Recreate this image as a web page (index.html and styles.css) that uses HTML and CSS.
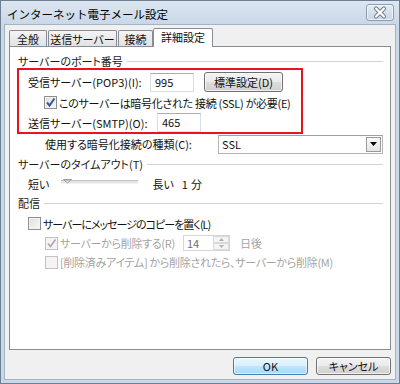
FILE: index.html
```html
<!DOCTYPE html>
<html lang="ja">
<head>
<meta charset="utf-8">
<title>インターネット電子メール設定</title>
<link rel="stylesheet" href="styles.css">
</head>
<body>
<div class="window">
  <div class="titlebar">
    <span class="title">インターネット電子メール設定</span>
    <span class="close">
      <svg width="26" height="15" viewBox="0 0 26 15"><path d="M9 3.5 L17 11.5 M17 3.5 L9 11.5" stroke="#6f7d8f" stroke-width="4.2" stroke-linecap="round"/><path d="M9 3.5 L17 11.5 M17 3.5 L9 11.5" stroke="#ffffff" stroke-width="2.2" stroke-linecap="round"/></svg>
    </span>
  </div>
  <div class="client">
    <div class="tabs">
      <span class="tab t1">全般</span>
      <span class="tab t2">送信サーバー</span>
      <span class="tab t3">接続</span>
      <span class="tab active">詳細設定</span>
    </div>
    <div class="panel">
      <div class="group first">サーバーのポート番号</div>
      <div class="highlight">
        <div class="row r1"><span class="lbl w-pop">受信サーバー(POP3)(I):</span><span class="input">995</span><span class="btn std">標準設定(D)</span></div>
        <div class="row r2"><span class="cb"><svg width="11" height="11" viewBox="0 0 11 11"><path d="M2 5.5 L4.5 8.5 L9.5 1.5" fill="none" stroke="#3b5597" stroke-width="2"/></svg></span><span class="tight">このサーバーは暗号化された 接続 (SSL) が必要(E)</span></div>
        <div class="row r3"><span class="lbl w-smtp">送信サーバー(SMTP)(O):</span><span class="input">465</span></div>
      </div>
      <div class="row r4"><span class="lbl w-enc">使用する暗号化接続の種類(C):</span><span class="select"><span class="sel-text">SSL</span><span class="sel-arrow"><svg width="7" height="4" viewBox="0 0 7 4"><path d="M0 0 H7 L3.5 4 Z" fill="#000"/></svg></span></span></div>
      <div class="group">サーバーのタイムアウト(T)</div>
      <div class="row timeout">
        <span>短い</span>
        <span class="slider"><span class="thumb"><svg width="9" height="6" viewBox="0 0 9 6"><path d="M0.5 1.5 H8.5 M0.5 1.5 L4.5 5 L8.5 1.5" fill="none" stroke="#9a9a9a" stroke-width="1"/></svg></span></span>
        <span class="long">長い</span>
        <span class="num">1</span>
        <span class="unit">分</span>
      </div>
      <div class="group">配信</div>
      <div class="row rl"><span class="cb"></span><span class="tighter">サーバーにメッセージのコピーを置く(L)</span></div>
      <div class="row rr disabled"><span class="cb dis"><svg width="11" height="11" viewBox="0 0 11 11"><path d="M2 5.5 L4.5 8.5 L9.5 1.5" fill="none" stroke="#a8a8a8" stroke-width="1.6"/></svg></span><span class="lbl w-del tight">サーバーから削除する(R)</span><span class="spin"><span class="spin-text">14</span><span class="spin-btns"><span class="sb"><svg width="5" height="3" viewBox="0 0 5 3"><path d="M0 3 L2.5 0 L5 3 Z" fill="#b0b0b0"/></svg></span><span class="sb"><svg width="5" height="3" viewBox="0 0 5 3"><path d="M0 0 L2.5 3 L5 0 Z" fill="#b0b0b0"/></svg></span></span></span><span class="days">日後</span></div>
      <div class="row rm disabled"><span class="cb dis"></span><span class="tight">[削除済みアイテム] から削除されたら、サーバーから削除(M)</span></div>
    </div>
    <div class="buttons">
      <span class="btn dlg default">OK</span>
      <span class="btn dlg">キャンセル</span>
    </div>
  </div>
</div>
</body>
</html>
```
FILE: styles.css
```css
* { box-sizing: border-box; margin: 0; padding: 0; }
html, body { width: 400px; height: 384px; overflow: hidden; }
body {
  font-family: "Noto Sans CJK JP", "Noto Sans", sans-serif;
  font-size: 11px;
  color: #111;
  font-feature-settings: "palt";
  background: #fff;
}
.window {
  width: 400px;
  height: 384px;
  border: 1px solid #6e7f92;
  background: #c9d7e7;
  padding: 0 3px 3px;
  display: flex;
  flex-direction: column;
}
.titlebar {
  height: 23px;
  flex: none;
  margin: 0 -3px;
  padding: 0 5px 0 6px;
  display: flex;
  align-items: flex-start;
  justify-content: space-between;
  background: linear-gradient(#dde7f2, #c9d7e7);
}
.title {
  font-size: 11.5px;
  line-height: 20px;
  margin-top: 3px;
  color: #000;
  font-feature-settings: normal;
}
.close {
  margin-top: 3px;
  width: 28px;
  height: 17px;
  border: 1px solid #8d9db1;
  border-radius: 3px;
  background: linear-gradient(#e4ecf5, #c8d6e6);
  display: flex;
  align-items: center;
  justify-content: center;
  box-shadow: inset 0 0 0 1px rgba(255,255,255,0.6);
}
.client {
  flex: 1;
  background: #f0f0f0;
  border: 1px solid #a3b2c4;
  padding: 3px 4px 4px 4px;
  display: flex;
  flex-direction: column;
}
.tabs {
  display: flex;
  align-items: flex-end;
  height: 18px;
  position: relative;
  z-index: 1;
}
.tab {
  height: 16px;
  border: 1px solid #898c95;
  border-bottom: none;
  background: linear-gradient(#f4f4f4, #e2e2e2);
  display: flex;
  align-items: center;
  justify-content: center;
  margin-right: 1px;
  line-height: 14px;
  border-radius: 2px 2px 0 0;
  white-space: nowrap;
}
.t1 { width: 38px; }
.t2 { width: 69px; }
.t3 { width: 35px; }
.tab.active {
  width: 60px;
  height: 19px;
  margin-left: -1px;
  margin-bottom: -1px;
  background: #fff;
  padding-bottom: 2px;
}
.panel {
  height: 304px;
  flex: none;
  background: #fff;
  border: 1px solid #898c95;
  padding: 0 7px 0 8px;
}
.group {
  height: 20px;
  display: flex;
  align-items: center;
  color: #1a1a1a;
}
.group::after {
  content: "";
  flex: 1;
  height: 1px;
  background: #d3d3d3;
  margin-left: 4px;
  margin-top: 1px;
}
.group.first { height: 15px; margin-top: 6px; }
.highlight {
  width: 286px;
  height: 66px;
  margin-left: -1px;
  border: 2px solid #e8141e;
  padding: 2px 0 0 9px;
}
.row {
  display: flex;
  align-items: center;
  white-space: nowrap;
}
.tight { letter-spacing: -0.3px; }
.tighter { letter-spacing: -1px; }
.lbl { flex: none; }
.r1 { height: 20px; }
.r2 { height: 21px; padding-left: 16px; }
.r3 { height: 19px; }
.w-pop { width: 122px; }
.w-smtp { width: 129px; }
.input {
  width: 44px;
  height: 19px;
  border: 1px solid #d9dfe6;
  border-top-color: #abadb3;
  padding-left: 4px;
  line-height: 17px;
  background: #fff;
}
.btn {
  display: flex;
  align-items: center;
  justify-content: center;
  border: 1px solid #707070;
  border-radius: 3px;
  background: linear-gradient(#f3f3f3 0%, #ebebeb 48%, #dddddd 52%, #cfcfcf 100%);
  box-shadow: inset 0 0 0 1px rgba(255,255,255,0.7);
}
.std { width: 79px; height: 20px; margin-left: 10px; }
.cb {
  flex: none;
  width: 13px;
  height: 13px;
  border: 1px solid #8e8f8f;
  background: linear-gradient(135deg, #dcdcdc, #fbfbfb);
  box-shadow: inset 0 0 0 1px #f4f4f4;
  margin-right: 2px;
  display: flex;
  align-items: center;
  justify-content: center;
}
.cb.dis {
  border-color: #c2c2c2;
  background: #f4f4f4;
  box-shadow: none;
}
.r4 { height: 20px; padding-left: 27px; }
.w-enc { width: 173px; }
.select {
  flex: 1;
  height: 19px;
  border: 1px solid #b5b5b5;
  border-top-color: #a0a0a0;
  display: flex;
  align-items: center;
  justify-content: space-between;
  padding: 0 1px 0 3px;
  background: #fff;
}
.sel-arrow {
  width: 15px;
  height: 15px;
  border: 1px solid #9a9a9a;
  background: linear-gradient(#f8f8f8, #e4e4e4);
  display: flex;
  align-items: center;
  justify-content: center;
}
.timeout { height: 19px; padding-left: 10px; }
.slider {
  position: relative;
  width: 77px;
  height: 4px;
  margin-left: 12px;
  margin-top: -4px;
  border-top: 1px solid #c4c4c4;
  border-bottom: 1px solid #f2f2f2;
  background: #e6e6e6;
}
.thumb { position: absolute; left: 2px; top: -3px; display: flex; }
.long { margin-left: 14px; }
.num { margin-left: 8px; }
.unit { margin-left: 3px; }
.rl { height: 21px; padding-left: 10px; }
.rr { height: 16px; margin-top: 1px; padding-left: 27px; }
.rm { height: 20px; margin-top: 1px; padding-left: 27px; }
.disabled { color: #a3a3a3; }
.w-del { width: 123px; }
.spin {
  width: 47px;
  height: 16px;
  border: 1px solid #d5d5d5;
  display: flex;
  align-items: center;
  justify-content: space-between;
  color: #6d6d6d;
  padding-left: 3px;
  background: #fff;
}
.spin-btns {
  width: 16px;
  height: 14px;
  display: flex;
  flex-direction: column;
}
.sb {
  flex: 1;
  border: 1px solid #dadada;
  background: #f4f4f4;
  display: flex;
  align-items: center;
  justify-content: center;
}
.days { margin-left: 10px; }
.buttons {
  display: flex;
  justify-content: flex-end;
  gap: 8px;
  margin-top: 7px;
  height: 18px;
}
.dlg { width: 75px; height: 18px; }
.default {
  border-color: #3c7fb1;
  background: linear-gradient(#eaf6fd 0%, #d9f0fc 48%, #bee6fd 52%, #a7d9f5 100%);
  box-shadow: inset 0 0 0 1px rgba(255,255,255,0.6);
}
```
